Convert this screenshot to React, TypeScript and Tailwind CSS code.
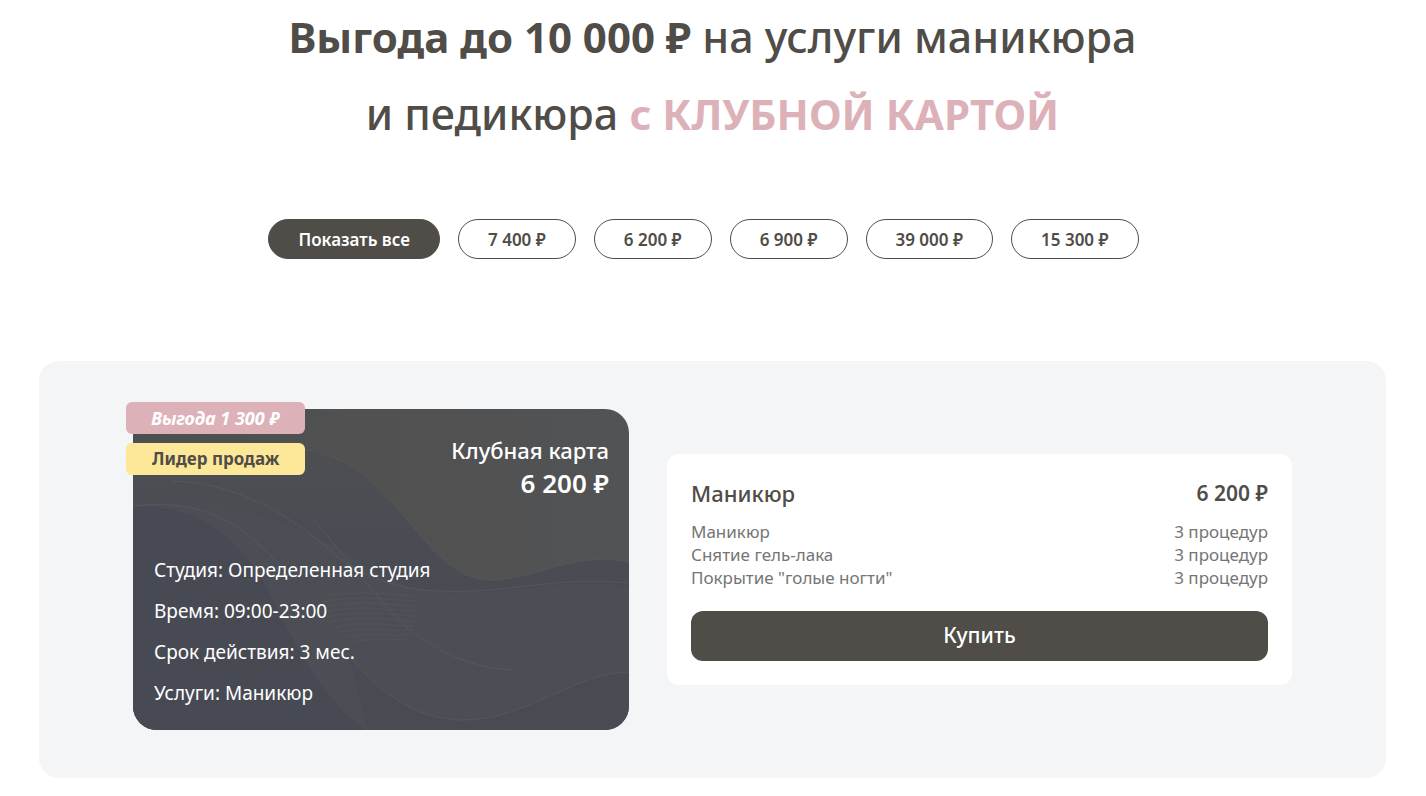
import { useState } from "react";
import clsx from "clsx";

const PRICES = ["7 400 ₽", "6 200 ₽", "6 900 ₽", "39 000 ₽", "15 300 ₽"];

const DETAILS = [
  "Студия: Определенная студия",
  "Время: 09:00-23:00",
  "Срок действия: 3 мес.",
  "Услуги: Маникюр",
];

const SERVICES = [
  { name: "Маникюр", amount: "3 процедур" },
  { name: "Снятие гель-лака", amount: "3 процедур" },
  { name: 'Покрытие "голые ногти"', amount: "3 процедур" },
];

function Filters() {
  const [active, setActive] = useState("Показать все");

  return (
    <div className="mt-[67px] flex flex-wrap justify-center">
      {["Показать все", ...PRICES].map((label) => (
        <button
          key={label}
          type="button"
          onClick={() => setActive(label)}
          className={clsx(
            "mr-[18px] h-10 cursor-pointer rounded-full border border-[#504c47] px-[29px] pt-px text-[17px] font-semibold",
            active === label ? "bg-[#504c47] text-white" : "bg-white text-[#504c47]"
          )}
        >
          {label}
        </button>
      ))}
    </div>
  );
}

function CardWaves() {
  return (
    <svg
      viewBox="0 0 496 321"
      preserveAspectRatio="none"
      className="absolute inset-0 h-full w-full rounded-3xl"
      aria-hidden="true"
    >
      <defs>
        <linearGradient id="base" x1="0" y1="0" x2="1" y2="0">
          <stop offset="0" stopColor="#4d4f50" />
          <stop offset="0.5" stopColor="#515152" />
          <stop offset="1" stopColor="#525354" />
        </linearGradient>
        <linearGradient id="wave" x1="0" y1="0" x2="0" y2="1">
          <stop offset="0" stopColor="#4d4f51" />
          <stop offset="0.35" stopColor="#494c53" />
          <stop offset="1" stopColor="#494b53" />
        </linearGradient>
      </defs>
      <rect width="496" height="321" fill="url(#base)" />
      <path
        d="M0 30C90 20 170 30 213 54C275 90 300 171 358 171C400 171 440 142 496 153V321H0Z"
        fill="url(#wave)"
      />
      <path
        d="M150 38C180 40 200 47 213 54C275 90 300 171 358 171C400 171 440 142 496 153"
        fill="none"
        stroke="#62605e"
        strokeOpacity="0.45"
      />
      <path
        d="M0 97C70 82 170 115 215 145C260 178 290 184 330 184C390 184 430 168 496 178V263C440 264 395 311 330 311C290 311 250 290 215 245L235 321H0Z"
        fill="#4e5057"
        fillOpacity="0.55"
      />
      <path
        d="M0 98C70 92 115 140 140 190C165 245 195 295 232 321H0Z"
        fill="#474a53"
        fillOpacity="0.75"
      />
      <g fill="none" stroke="#66666a" strokeOpacity="0.4">
        <path d="M40 72C110 74 165 112 205 148C250 180 290 184 340 182C390 180 430 168 496 174" />
        <path d="M0 97C75 88 115 120 150 160" />
        <path d="M180 110C210 145 245 190 270 215C310 247 340 259 382 261" />
        <path d="M215 245C250 290 290 311 330 311C395 311 440 264 496 263" />
      </g>
      <g fill="none" stroke="#66696c" strokeOpacity="0.25">
        <path d="M190 188C225 180 265 186 285 188" />
        <path d="M190 193C224 185 265 192 285 192" />
        <path d="M191 198C225 190 265 197 284 197" />
        <path d="M192 203C227 195 265 202 284 202" />
        <path d="M194 208C231 200 265 207 284 207" />
        <path d="M197 213C235 205 265 212 284 212" />
        <path d="M201 218C238 211 262 218 282 217" />
        <path d="M206 223C240 217 260 223 280 221" />
        <path d="M212 228C242 223 258 228 276 226" />
        <path d="M218 233C242 229 258 232 270 230" />
      </g>
    </svg>
  );
}

function ClubCard() {
  return (
    <div className="relative flex min-h-[321px] flex-col justify-between rounded-3xl pt-[25px] pr-5 pb-4 pl-[21px] text-white">
      <CardWaves />
      <div className="absolute top-[-7px] left-[-7px] flex flex-col items-start gap-[9px] text-[17px] leading-8 font-bold">
        <span className="rounded-md bg-[#dcb1b8] px-[25px] text-lg leading-8 italic">
          Выгода 1 300 ₽
        </span>
        <span className="rounded-md bg-[#fde798] px-[26px] text-[#504c47]">Лидер продаж</span>
      </div>
      <div className="relative text-right leading-[33px]">
        <div className="text-[22px] font-medium">Клубная карта</div>
        <div className="text-[26px] font-semibold">6 200 ₽</div>
      </div>
      <ul className="relative text-[19px] leading-[41px]">
        {DETAILS.map((line) => (
          <li key={line}>{line}</li>
        ))}
      </ul>
    </div>
  );
}

function Offer() {
  return (
    <div className="rounded-xl bg-white p-6">
      <div className="flex justify-between leading-[30px] text-[#504c47]">
        <h2 className="text-[22px] font-medium">Маникюр</h2>
        <span className="text-[21px] font-semibold">6 200 ₽</span>
      </div>
      <ul className="mt-3 text-[17px] leading-[23px] text-[#757575]">
        {SERVICES.map((service) => (
          <li key={service.name} className="flex justify-between">
            <span>{service.name}</span>
            <span>{service.amount}</span>
          </li>
        ))}
      </ul>
      <button
        type="button"
        className="mt-[22px] h-[50px] w-full cursor-pointer rounded-xl bg-[#504c47] text-[21px] font-medium text-white"
      >
        Купить
      </button>
    </div>
  );
}

export default function App() {
  return (
    <main className="pr-10 pb-[19px] pl-[39px] font-['Noto_Sans',sans-serif]">
      <h1 className="mt-[-2px] text-center text-[43px] leading-[77px] font-medium text-[#504c47]">
        <b className="text-[42px] font-bold">Выгода до 10 000 ₽</b> на услуги маникюра
        <br />
        и педикюра <b className="text-[42px] font-bold text-[#dcb1b8]">с КЛУБНОЙ КАРТОЙ</b>
      </h1>
      <Filters />
      <section className="mt-[102px] grid grid-cols-[496fr_625fr] items-center gap-[38px] rounded-[20px] bg-[#f3f5f7] px-[94px] py-12">
        <ClubCard />
        <Offer />
      </section>
    </main>
  );
}
